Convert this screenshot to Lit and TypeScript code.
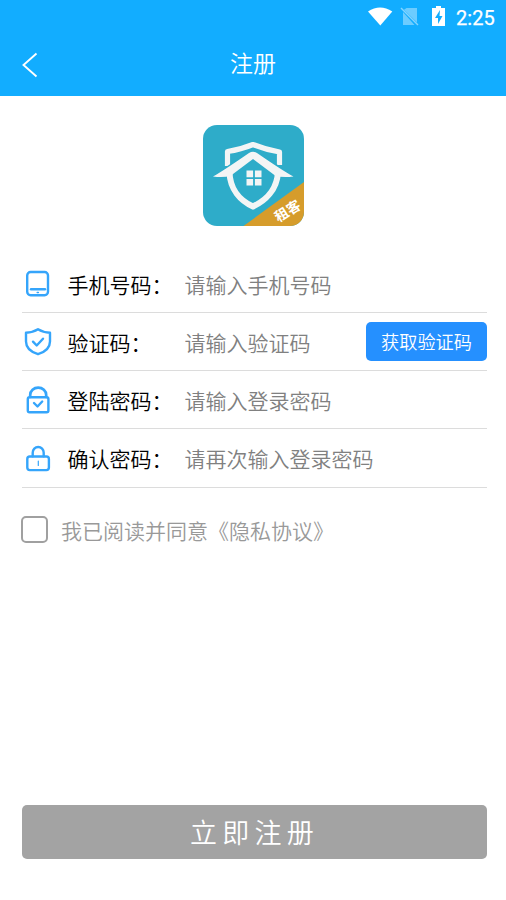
import { LitElement, html, css, svg } from "lit";
import { customElement, property, state } from "lit/decorators.js";

const icons: Record<string, unknown> = {
  phone: svg`<rect x="5.2" y="4" width="20.800" height="23.200" rx="3.400"/><path d="M9 21.300h14"/><path d="M15.200 24.400h1.200" stroke-width="1.500"/>`,
  shield: svg`<path d="M16 3.300C19.500 5.500 23.500 6.500 28 6.800V15.500C28 21.500 23 26 16 28.200C9 26 4 21.500 4 15.500V6.800C8.500 6.500 12.500 5.500 16 3.300Z"/><path d="M11 15.700l3.700 3.800L21 12.700"/>`,
  lockCheck: svg`<rect x="5.800" y="13.300" width="20.600" height="15" rx="1.800"/><path d="M8.200 13v-2a8 7.300 0 0 1 16 0V13" stroke-width="2.700"/><path d="M12 19l3.500 3.500 4.700-5"/>`,
  lock: svg`<rect x="5.300" y="14.500" width="21.600" height="13.600" rx="2.500"/><path d="M10.700 14.300v-3.500a5.500 5.800 0 0 1 11 0v3.500"/><path d="M16.300 19v4.400" stroke-width="1.200"/>`,
};

@customElement("status-bar")
class StatusBar extends LitElement {
  static styles = css`
    :host { display: flex; height: 32px; justify-content: flex-end; align-items: center; color: #fff; padding-right: 11px; box-sizing: border-box; }
    .glyphs { width: 82px; height: 32px; flex: none; }
    .time { font: 400 20px/32px Roboto, sans-serif; width: 39px; margin-left: 6px; padding-top: 3px; white-space: nowrap; letter-spacing: .1px; -webkit-text-stroke: .25px #fff; }
  `;
  render() {
    return html`
      <svg class="glyphs" viewBox="368 0 82 32" fill="#fff">
        <path d="M368 11.500Q380 3.500 392.300 11.500L380.300 25.600Z"/>
        <path opacity=".38" d="M406.500 8H417V22.500L404 9.800ZM403 12L414.500 25H403Z"/>
        <path opacity=".48" d="M401 8l17 17" stroke="#fff" stroke-width="1.500"/>
        <path fill-rule="evenodd" d="M436 6h5v2h4v18h-13V8h4ZM440 10l-5 8h3v6l4.500-8h-3Z"/>
      </svg>
      <span class="time">2:25</span>`;
  }
}

@customElement("brand-logo")
class BrandLogo extends LitElement {
  static styles = css`
    :host { display: block; width: 101px; height: 101px; }
    svg { display: block; width: 101px; height: 101px; border-radius: 14px; }
    text { font: 700 13.800px/1 "Noto Sans CJK SC", sans-serif; }
  `;
  render() {
    return html`<svg viewBox="0 0 101 101">
      <rect width="101" height="101" fill="#2eacc9"/>
      <path d="M101 57V101H40.500Z" fill="#d69c2b"/>
      <g fill="none" stroke="#f3f5f5">
        <path d="M24.500 41V26.500Q38 24.500 50 19.500Q62 24.500 76.500 27V40" stroke-width="5.200" stroke-linejoin="round"/>
        <path d="M26.500 47C27 65 38 76 50 81.500C62 76 74 65 75 47" stroke-width="6"/>
      </g>
      <path d="M20 44L50 23.500L81 44L76 48L50 30L25 48Z" fill="#2eacc9"/>
      <path d="M10 51.500Q20 46 46 28Q50 25.500 54 28Q80 46 90.500 51.500Q79 53 72 50.500L50 34L28 50.500Q21 53 10 51.500Z" fill="#f3f5f5"/>
      <path d="M43.500 45.500h6.600v6.700h-6.600ZM51.900 45.500h6.600v6.700h-6.600ZM43.500 53.900h6.600v6.600h-6.600ZM51.900 53.900h6.600v6.600h-6.600Z" fill="#f3f5f5"/>
      <text transform="translate(75.500 97.500) rotate(-32)" fill="#fff">租客</text>
    </svg>`;
  }
}

@customElement("form-row")
class FormRow extends LitElement {
  @property() icon = "";
  @property() label = "";
  @property() hint = "";
  static styles = css`
    :host { display: flex; align-items: center; height: 58px; box-sizing: border-box; border-bottom: 1px solid #dcdcdc; }
    .icon { width: 32px; height: 32px; flex: none; fill: none; stroke: #35a5fb; stroke-width: 2.400; stroke-linecap: round; stroke-linejoin: round; }
    .label { width: 117px; margin-left: 13.500px; color: #000; flex: none; }
    .hint { color: #808080; flex: 1; white-space: nowrap; }
  `;
  render() {
    return html`
      <svg class="icon" viewBox="0 0 32 32">${icons[this.icon]}</svg>
      <span class="label">${this.label}</span>
      <span class="hint">${this.hint}</span>
      <slot></slot>`;
  }
}

@customElement("app-root")
class AppRoot extends LitElement {
  @state() private agreed = false;
  static styles = css`
    :host { display: flex; flex-direction: column; height: 900px; box-sizing: border-box; background: #fff; font: 350 21px/30px "Noto Sans CJK SC", sans-serif; }
    .header { background: #12adff; height: 96px; color: #fff; flex: none; }
    .nav { display: grid; grid-template-columns: 60px 1fr 60px; height: 64px; align-items: center; }
    .back { width: 18px; height: 28px; margin-left: 21px; margin-top: 2px; fill: none; stroke: #fff; stroke-width: 1.900; }
    .title { text-align: center; font-size: 23px; padding-bottom: 4px; }
    .logo { margin: 29px auto 0 203px; flex: none; }
    .form { margin: 29px 19px 0 22px; }
    .form form-row:last-child { height: 59px; }
    .code { background: #2590ff; color: #fff; width: 121px; height: 39px; border-radius: 5px; font-size: 18.200px; line-height: 38px; text-align: center; }
    .agree { display: flex; align-items: center; margin: 27px 0 0 21px; gap: 13px; color: #999; height: 30px; }
    .box { width: 27px; height: 27px; box-sizing: border-box; border: 2px solid #a0a0a0; border-radius: 5px; margin-bottom: 2px; }
    .submit { margin: auto 19px 41px 22px; height: 54px; border-radius: 5px; background: #a3a3a3; color: #fff; font-size: 27px; line-height: 54px; letter-spacing: 5.200px; text-align: center; flex: none; }
  `;
  render() {
    return html`
      <div class="header">
        <status-bar></status-bar>
        <div class="nav">
          <svg class="back" viewBox="0 0 18 28"><path d="M15.500 2.500L2.500 14L15.500 25.500"/></svg>
          <span class="title">注册</span>
        </div>
      </div>
      <brand-logo class="logo"></brand-logo>
      <div class="form">
        <form-row icon="phone" label="手机号码：" hint="请输入手机号码"></form-row>
        <form-row icon="shield" label="验证码：" hint="请输入验证码"><div class="code">获取验证码</div></form-row>
        <form-row icon="lockCheck" label="登陆密码：" hint="请输入登录密码"></form-row>
        <form-row icon="lock" label="确认密码：" hint="请再次输入登录密码"></form-row>
      </div>
      <div class="agree" @click=${() => (this.agreed = !this.agreed)}>
        <span class="box"></span><span>我已阅读并同意《隐私协议》</span>
      </div>
      <div class="submit">立即注册</div>`;
  }
}
